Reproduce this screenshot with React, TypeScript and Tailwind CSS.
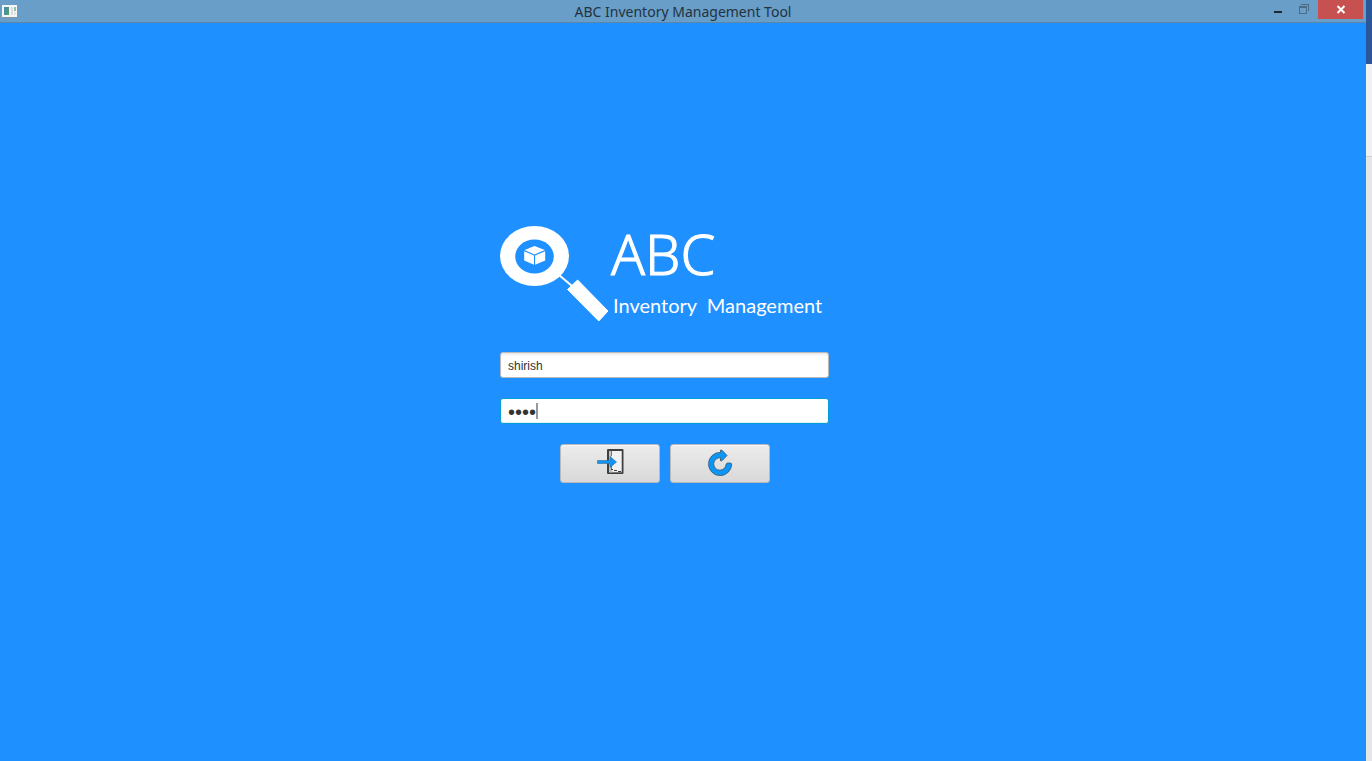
import { useState, type FormEvent } from "react";

function AppIcon() {
  return (
    <svg width="16" height="13" viewBox="0 0 16 13" aria-hidden="true" shapeRendering="crispEdges">
      <defs>
        <linearGradient id="pane" x1="0" y1="0" x2="1" y2="1">
          <stop offset="0" stopColor="#4a86b0" />
          <stop offset="1" stopColor="#4fa36c" />
        </linearGradient>
      </defs>
      <rect x="0" y="0" width="16" height="13" fill="#8b9299" />
      <rect x="0" y="0" width="15" height="12" fill="#f6f6f4" />
      <rect x="2" y="2" width="5" height="8" fill="url(#pane)" />
      <rect x="9" y="2" width="2" height="8" fill="#dcdcdc" />
      <rect x="12" y="2" width="2" height="4" fill="#8fbfae" />
      <rect x="12" y="7" width="2" height="3" fill="#e4e4e4" />
    </svg>
  );
}

function TitleBar() {
  return (
    <header className="grid h-[23px] grid-cols-[1fr_auto_1fr] items-start border-b border-[#5c87ab] bg-[#689ec8]">
      <div className="pt-[5px] pl-[2px]">
        <AppIcon />
      </div>
      <h1 className="pt-px font-['Noto_Sans',sans-serif] text-[14px] leading-[22px] text-[#24323d]">
        ABC Inventory Management Tool
      </h1>
      <div className="flex justify-end pr-[3px]">
        <button type="button" aria-label="Minimize" className="flex h-[19px] w-[26px] items-center justify-center">
          <svg width="26" height="19" viewBox="0 0 26 19" shapeRendering="crispEdges" aria-hidden="true">
            <rect x="10" y="11" width="8" height="2" fill="#20282e" />
          </svg>
        </button>
        <button type="button" aria-label="Restore" className="flex h-[19px] w-[28px] items-center justify-center">
          <svg
            width="28"
            height="19"
            viewBox="0 0 28 19"
            fill="none"
            stroke="#4b6c86"
            shapeRendering="crispEdges"
            aria-hidden="true"
          >
            <path d="M11 4.5H18.5V11" />
            <rect x="9.5" y="6.5" width="7" height="7" />
            <path d="M9 7.5H17" />
          </svg>
        </button>
        <button type="button" aria-label="Close" className="flex h-[19px] w-[45px] items-center justify-center bg-[#c75050]">
          <svg width="45" height="19" viewBox="0 0 45 19" fill="none" stroke="#ffffff" strokeWidth="2" aria-hidden="true">
            <path d="M19.5 6L26.5 13M26.5 6L19.5 13" />
          </svg>
        </button>
      </div>
    </header>
  );
}

function Logo() {
  return (
    <div className="flex gap-[2px]">
      <svg width="109" height="96" viewBox="0 0 109 96" className="shrink-0" aria-hidden="true">
        <ellipse cx="34.5" cy="30" rx="34.5" ry="30" fill="#ffffff" />
        <ellipse cx="34.5" cy="30.5" rx="19.3" ry="17" fill="#1e90ff" />
        <path d="M34.5 20L44.8 24L34.5 28.4L24.5 24Z" fill="#ffffff" />
        <path d="M24.2 25.2L34 29.5V38.8L24.2 34.6Z" fill="#ffffff" />
        <path d="M45.2 25.2L35.1 29.5V38.8L45.2 34.6Z" fill="#ffffff" />
        <path d="M59 49L72 60" stroke="#ffffff" strokeWidth="2" />
        <path
          d="M77.6 54L108 85L98.8 95L67.5 63.5Z"
          fill="#ffffff"
          stroke="#ffffff"
          strokeWidth="1"
          strokeLinejoin="round"
        />
      </svg>
      <div className="whitespace-pre text-white">
        <p className="font-['Noto_Sans',sans-serif] text-[56px] leading-[54px] font-light [-webkit-text-stroke:1px_white]">
          ABC
        </p>
        <p className="pt-[12px] pl-[2px] font-['Lato',sans-serif] text-[20px] leading-[26px]">Inventory  Management</p>
      </div>
    </div>
  );
}

function EnterIcon() {
  return (
    <svg width="28" height="28" viewBox="0 0 28 28" aria-hidden="true">
      <rect x="11" y="1" width="16.5" height="25" rx="1" fill="#404042" />
      <rect x="13" y="3" width="12.7" height="21.3" fill="#f2f2f2" />
      <path d="M13 3H15.5V21L17 24.3H13Z" fill="#c4c4c4" />
      <path d="M15.5 3V8M15.5 17V21" stroke="#777777" />
      <path d="M15 21.5H17M18 22.5H21M22 23.5H25" stroke="#3a3a3c" />
      <path d="M1.5 12.5H14V8.5L20.5 14L14 19.5V15.5H1.5Z" fill="#0c96f8" stroke="#3f6a8c" strokeWidth="0.6" />
    </svg>
  );
}

function ResetIcon() {
  return (
    <svg width="28" height="28" viewBox="0 0 28 28" aria-hidden="true">
      <path
        d="M14.5 2.2H16L21 7.5L16 12.8H14.5V9.8A6.2 6.2 0 1 0 20.1 16L21.3 15H24.7L25.7 16A11.6 11.6 0 1 1 14.5 4.4Z"
        fill="#0c96f8"
        stroke="#3b5468"
        strokeWidth="0.8"
      />
    </svg>
  );
}

const buttonClass =
  "flex h-[39px] w-[100px] items-start justify-center rounded-[3px] border border-[#b9b9b9] bg-linear-to-b from-[#ececec] to-[#d9d9d9] pt-[3px] shadow-[inset_0_1px_0_#f6f6f6]";

function LoginForm() {
  const [user, setUser] = useState("shirish");
  const [password, setPassword] = useState("1234");

  const submit = (event: FormEvent) => event.preventDefault();
  const reset = () => {
    setUser("");
    setPassword("");
  };

  return (
    <form onSubmit={submit} className="flex flex-col gap-[20px] font-['Liberation_Sans',sans-serif] text-[12px] text-[#333333]">
      <input
        type="text"
        aria-label="Username"
        value={user}
        onChange={(event) => setUser(event.target.value)}
        className="h-[26px] w-full rounded-[3px] border border-[#bababa] bg-white px-[7px] pt-px shadow-[inset_0_2px_2px_#ececec] outline-none"
      />
      <div className="relative">
        <input
          type="password"
          aria-label="Password"
          value={password}
          onChange={(event) => setPassword(event.target.value)}
          className="block h-[26px] w-full rounded-[3px] border border-[#039ed3] bg-white px-[7px] pt-[2px] text-[20px] shadow-[inset_0_-1px_0_#dff1f8] outline-none"
        />
        {password.length === 4 && <span className="absolute top-[5px] left-[36px] h-[16px] w-[2px] bg-[#999999]" />}
      </div>
      <div className="flex justify-center gap-[10px]">
        <button type="submit" aria-label="Log in" className={buttonClass}>
          <EnterIcon />
        </button>
        <button type="button" aria-label="Reset" onClick={reset} className={buttonClass}>
          <ResetIcon />
        </button>
      </div>
    </form>
  );
}

export default function App() {
  return (
    <div className="flex min-h-screen">
      <div className="flex flex-1 flex-col bg-[#1e90ff]">
        <TitleBar />
        <main className="flex flex-1 flex-col items-center justify-center pr-[37px] pb-[75px]">
          <div className="flex w-[329px] flex-col gap-[30px]">
            <Logo />
            <LoginForm />
          </div>
        </main>
      </div>
      <aside aria-hidden="true" className="flex w-[6px] flex-col">
        <div className="h-[64px] bg-[#2b579a]" />
        <div className="h-[92px] bg-[#f1f1f1]" />
        <div className="flex-1 border-t border-[#cfcfcf] bg-[#e6e6e6]" />
      </aside>
    </div>
  );
}
